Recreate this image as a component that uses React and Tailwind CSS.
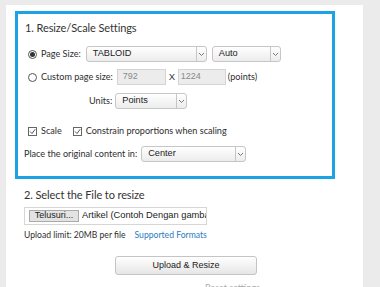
import React from "react";

const lato = { fontFamily: "Lato, 'Open Sans', sans-serif" };
const arial = { fontFamily: "'Liberation Sans', Arial, sans-serif" };

function Chevron() {
  return (
    <svg width="7" height="5" viewBox="0 0 7 5" className="block">
      <path d="M1 1 L3.5 3.5 L6 1" fill="none" stroke="#777" strokeWidth="1" />
    </svg>
  );
}

function Select({ value, className }) {
  return (
    <div
      className={`flex h-[16px] items-stretch rounded-[3px] border border-[#c6c6c6] bg-gradient-to-b from-white to-[#ececec] ${className}`}
    >
      <div className="flex flex-1 items-center pl-[6px] text-[9.2px] text-[#222]" style={arial}>
        {value}
      </div>
      <div className="flex w-[10px] items-center justify-center border-l border-[#c6c6c6]">
        <Chevron />
      </div>
    </div>
  );
}

function Radio({ checked }) {
  return (
    <div className="flex h-[9px] w-[9px] items-center justify-center rounded-full border border-[#555] bg-white">
      {checked && <div className="h-[5px] w-[5px] rounded-full bg-[#333]" />}
    </div>
  );
}

function Checkbox() {
  return (
    <div className="flex h-[9px] w-[9px] items-center justify-center border border-[#666] bg-white">
      <svg width="7" height="7" viewBox="0 0 7 7">
        <path d="M1 3.5 L3 5.5 L6.2 1.2" fill="none" stroke="#444" strokeWidth="0.9" />
      </svg>
    </div>
  );
}

const label = "text-[9.1px] text-[#2e2e2e]";

export default function App() {
  return (
    <div className="flex h-[287px] w-[380px] overflow-hidden bg-[#ebebeb] pl-[6px] pt-[5px]">
      <div className="flex h-[300px] w-[357px] flex-col bg-white text-[#333]" style={lato}>
        <div className="ml-[9px] mt-[6px] w-[320px] border-[3px] border-[#1ba3e6] pb-[14px] pl-[7px]">
          <div className="flex h-[26px] items-center pt-[3px] text-[11px] tracking-[-0.1px] text-[#333]">1. Resize/Scale Settings</div>

          <div className="mt-[6px] flex h-[16px] items-center">
            <div className="ml-[3px]"><Radio checked /></div>
            <span className={`ml-[4px] ${label}`}>Page Size:</span>
            <Select value="TABLOID" className="ml-[5px] w-[121px]" />
            <Select value="Auto" className="ml-[5px] w-[69px]" />
          </div>

          <div className="mt-[7px] flex h-[16px] items-center">
            <div className="ml-[3px]"><Radio /></div>
            <span className={`ml-[4px] ${label}`}>Custom page size:</span>
            <div className="ml-[4px] flex h-[16px] w-[49px] items-center border border-[#d4d4d4] bg-[#ececec] pl-[5px] text-[9px] text-[#8a8a8a]" style={arial}>792</div>
            <span className="ml-[3px] w-[8px] text-[9.5px]" style={arial}>X</span>
            <div className="ml-[1px] flex h-[16px] w-[48px] items-center border border-[#d4d4d4] bg-[#ececec] pl-[2px] text-[9px] text-[#8a8a8a]" style={arial}>1224</div>
            <span className={`ml-[2px] ${label}`}>(points)</span>
          </div>

          <div className="mt-[8px] flex h-[16px] items-center">
            <span className={`ml-[64px] ${label}`}>Units:</span>
            <Select value="Points" className="ml-[3px] w-[72px]" />
          </div>

          <div className="mt-[14px] flex h-[16px] items-center">
            <div className="ml-[3px]"><Checkbox /></div>
            <span className={`ml-[4px] ${label}`}>Scale</span>
            <div className="ml-[11px]"><Checkbox /></div>
            <span className={`ml-[4px] ${label}`}>Constrain proportions when scaling</span>
          </div>

          <div className="mt-[7px] flex h-[16px] items-center">
            <span className={`ml-[-1px] ${label}`}>Place the original content in:</span>
            <Select value="Center" className="ml-[4px] w-[105px]" />
          </div>
        </div>

        <div className="ml-[18px] mt-[7px] flex h-[18px] items-center text-[11px] tracking-[-0.1px]">2. Select the File to resize</div>

        <div className="ml-[18px] mt-[3px] flex h-[18px] w-[183px] items-center overflow-hidden whitespace-nowrap border border-[#d6d6d6] bg-white pl-[4px]">
          <div className="flex h-[12px] w-[50px] shrink-0 items-center justify-center border border-[#aaa] bg-[#e3e3e3] text-[9px] text-[#222]" style={arial}>Telusuri...</div>
          <span className="ml-[3px] text-[9.3px] text-[#222]" style={arial}>Artikel (Contoh Dengan gambar).pdf</span>
        </div>

        <div className="ml-[18px] mt-[3px] flex h-[14px] items-center text-[8.6px] text-[#2e2e2e]">
          <span>Upload limit: 20MB per file</span>
          <span className="ml-[9px] text-[#2a7bc2]">Supported Formats</span>
        </div>

        <div className="ml-[109px] mt-[14px] flex h-[19px] w-[142px] shrink-0 items-center justify-center rounded-[3px] border border-[#c4c4c4] bg-gradient-to-b from-white to-[#e6e6e6] text-[9px] text-[#222]" style={arial}>
          Upload &amp; Resize
        </div>

        <div className="ml-[199px] mt-[7px] text-[9px] leading-[12px] text-[#aaa]">Reset settings</div>
      </div>
    </div>
  );
}
